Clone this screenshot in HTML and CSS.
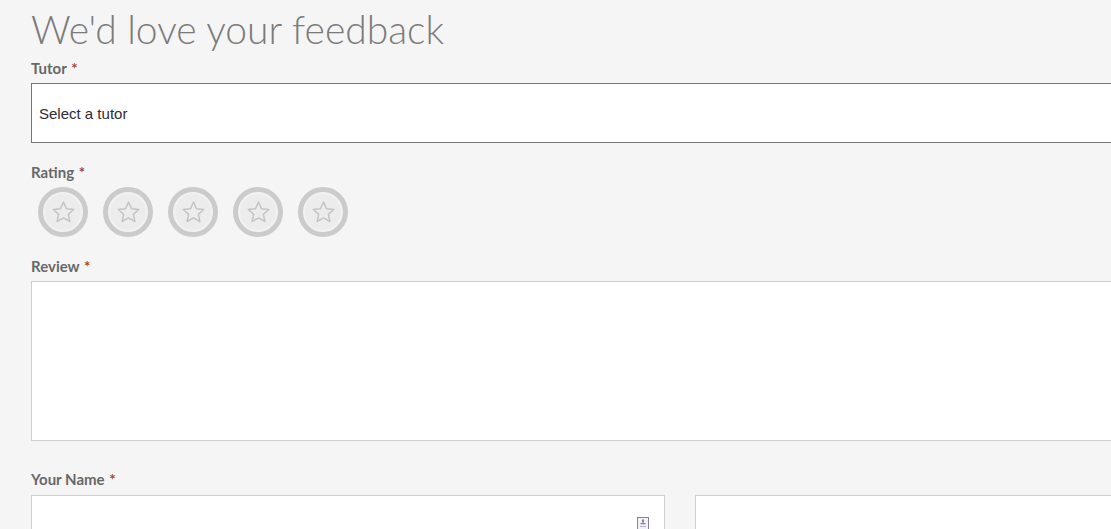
FILE: index.html
```html
<!DOCTYPE html>
<html lang="en">
<head>
<meta charset="utf-8">
<title>Feedback</title>
<link rel="stylesheet" href="styles.css">
</head>
<body>
<main class="page">
  <h1 class="title">We'd love your feedback</h1>
  <form class="form">
    <div class="field field-tutor">
      <label class="label">Tutor <span class="req">*</span></label>
      <div class="select">Select a tutor</div>
    </div>
    <div class="field field-rating">
      <label class="label">Rating <span class="req">*</span></label>
      <div class="stars">
        <span class="star"><svg viewBox="0 0 24 24" width="27" height="27"><path d="M12 2.8l2.7 5.9 6.4.7-4.8 4.3 1.4 6.3L12 16.8l-5.7 3.2 1.4-6.3-4.8-4.3 6.4-.7z" fill="none" stroke="#c4c4c4" stroke-width="1.3" stroke-linejoin="round"/></svg></span>
        <span class="star"><svg viewBox="0 0 24 24" width="27" height="27"><path d="M12 2.8l2.7 5.9 6.4.7-4.8 4.3 1.4 6.3L12 16.8l-5.7 3.2 1.4-6.3-4.8-4.3 6.4-.7z" fill="none" stroke="#c4c4c4" stroke-width="1.3" stroke-linejoin="round"/></svg></span>
        <span class="star"><svg viewBox="0 0 24 24" width="27" height="27"><path d="M12 2.8l2.7 5.9 6.4.7-4.8 4.3 1.4 6.3L12 16.8l-5.7 3.2 1.4-6.3-4.8-4.3 6.4-.7z" fill="none" stroke="#c4c4c4" stroke-width="1.3" stroke-linejoin="round"/></svg></span>
        <span class="star"><svg viewBox="0 0 24 24" width="27" height="27"><path d="M12 2.8l2.7 5.9 6.4.7-4.8 4.3 1.4 6.3L12 16.8l-5.7 3.2 1.4-6.3-4.8-4.3 6.4-.7z" fill="none" stroke="#c4c4c4" stroke-width="1.3" stroke-linejoin="round"/></svg></span>
        <span class="star"><svg viewBox="0 0 24 24" width="27" height="27"><path d="M12 2.8l2.7 5.9 6.4.7-4.8 4.3 1.4 6.3L12 16.8l-5.7 3.2 1.4-6.3-4.8-4.3 6.4-.7z" fill="none" stroke="#c4c4c4" stroke-width="1.3" stroke-linejoin="round"/></svg></span>
      </div>
    </div>
    <div class="field field-review">
      <label class="label">Review <span class="req">*</span></label>
      <div class="textarea"></div>
    </div>
    <div class="field field-name">
      <label class="label">Your Name <span class="req">*</span></label>
      <div class="name-row">
        <div class="input">
          <svg class="card-icon" viewBox="0 0 12 14" width="12" height="14"><rect x="0.5" y="0.5" width="11" height="13" fill="#f4f2f8" stroke="#8a8096"/><rect x="5" y="2.5" width="2" height="3" fill="#8a8096"/><rect x="3.5" y="6" width="5" height="1.3" fill="#8a8096"/><rect x="3" y="9" width="6" height="1" fill="#b8b0c4"/></svg>
        </div>
        <div class="input"></div>
      </div>
    </div>
  </form>
</main>
</body>
</html>
```
FILE: styles.css
```css
html, body {
  margin: 0;
  padding: 0;
  overflow: hidden;
  background: #f5f5f5;
}

.page {
  padding-left: 31px;
  width: 1300px;
  font-family: Lato, "Open Sans", sans-serif;
}

.title {
  margin: 0;
  padding-top: 5px;
  font-weight: 300;
  font-size: 39px;
  line-height: 48px;
  color: #7b7b7b;
}

.field {
  display: flex;
  flex-direction: column;
}

.label {
  font-weight: 700;
  font-size: 15px;
  line-height: 20px;
  color: #686868;
  margin-bottom: 6px;
}

.req {
  color: #a3462c;
  margin-left: 1px;
}

.field-tutor {
  margin-top: 5px;
}

.field-tutor .label {
  margin-bottom: 5px;
}

.select {
  height: 58px;
  border: 1px solid #767676;
  background: #fff;
  display: flex;
  align-items: center;
  padding-left: 7px;
  font-family: "Liberation Sans", Arial, sans-serif;
  font-size: 15px;
  color: #2f2a33;
}

.field-rating {
  margin-top: 19px;
}

.field-rating .label {
  margin-bottom: 5px;
}

.stars {
  display: flex;
  gap: 15px;
  padding-left: 7px;
}

.star {
  box-sizing: border-box;
  width: 50px;
  height: 50px;
  border-radius: 50%;
  border: 5px solid #cbcbcb;
  background: #ececec;
  box-shadow: inset 0 0 0 2px #f2f2f2;
  display: flex;
  align-items: center;
  justify-content: center;
}

.field-review {
  margin-top: 19px;
}

.field-review .label {
  margin-bottom: 5px;
}

.textarea {
  height: 158px;
  border: 1px solid #cfcfcf;
  background: #fff;
}

.field-name {
  margin-top: 28px;
}

.field-name .label {
  margin-bottom: 6px;
}

.name-row {
  display: grid;
  grid-template-columns: 634px 634px;
  gap: 30px;
}

.input {
  position: relative;
  height: 50px;
  border: 1px solid #cfcfcf;
  background: #fff;
}

.card-icon {
  position: absolute;
  right: 15px;
  top: 21px;
}
```
